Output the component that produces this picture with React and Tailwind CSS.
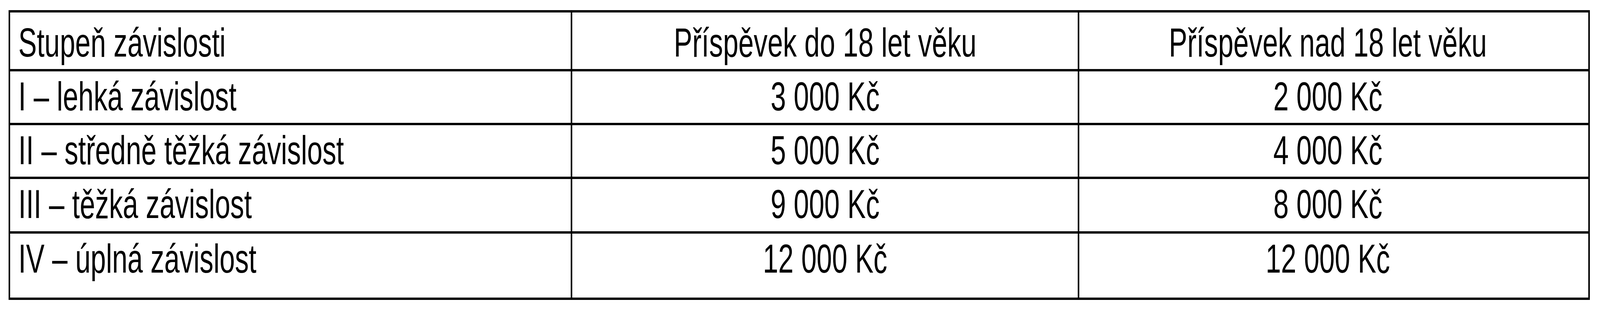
import { useState } from "react";

const rows = [
  { label: "I – lehká závislost", young: "3 000 Kč", adult: "2 000 Kč", h: "h-[138px]" },
  { label: "II – středně těžká závislost", young: "5 000 Kč", adult: "4 000 Kč", h: "h-[138px]" },
  { label: "III – těžká závislost", young: "9 000 Kč", adult: "8 000 Kč", h: "h-[140px]" },
  { label: "IV – úplná závislost", young: "12 000 Kč", adult: "12 000 Kč", h: "h-[164px]", last: true },
];

// the table is drawn for a 6022px wide page; on a narrower window the text is squeezed sideways
const Text = ({ k, left, children }) => (
  <span
    className={`inline-block ${left ? "origin-left" : "origin-center"}`}
    style={{ transform: `scaleX(${k})` }}
  >
    {children}
  </span>
);

const Row = ({ cells, h, pt, last, k }) => (
  <div
    className={`grid grid-cols-[2116fr_1908fr_1916fr] ${h} ${
      last ? "" : "border-b-[6px] border-black"
    }`}
  >
    <div className={`border-r-[length:0.1vw] border-black pl-[0.53vw] ${pt}`}>
      <Text k={k} left>
        {cells[0]}
      </Text>
    </div>
    <div className={`border-r-[length:0.1vw] border-black text-center ${pt}`}>
      <Text k={k}>{cells[1]}</Text>
    </div>
    <div className={`text-center pr-[0.76vw] ${pt}`}>
      <Text k={k}>{cells[2]}</Text>
    </div>
  </div>
);

const App = () => {
  const [k] = useState(() => Math.min(1, window.innerWidth / 6022));
  return (
    <div className="w-full h-[800px] bg-white pt-[26px] pl-[0.53vw] pr-[0.63vw] font-['Liberation_Sans',Arial,sans-serif] text-[104px] leading-[104px] text-black whitespace-nowrap">
      <div className="border-y-[6px] border-x-[length:0.1vw] border-black">
        <Row
          cells={["Stupeň závislosti", "Příspěvek do 18 let věku", "Příspěvek nad 18 let věku"]}
          h="h-[151px]"
          pt="pt-[25px]"
          k={k}
        />
        {rows.map((r) => (
          <Row
            key={r.label}
            cells={[r.label, r.young, r.adult]}
            h={r.h}
            pt="pt-[12px]"
            last={r.last}
            k={k}
          />
        ))}
      </div>
    </div>
  );
};

export default App;
